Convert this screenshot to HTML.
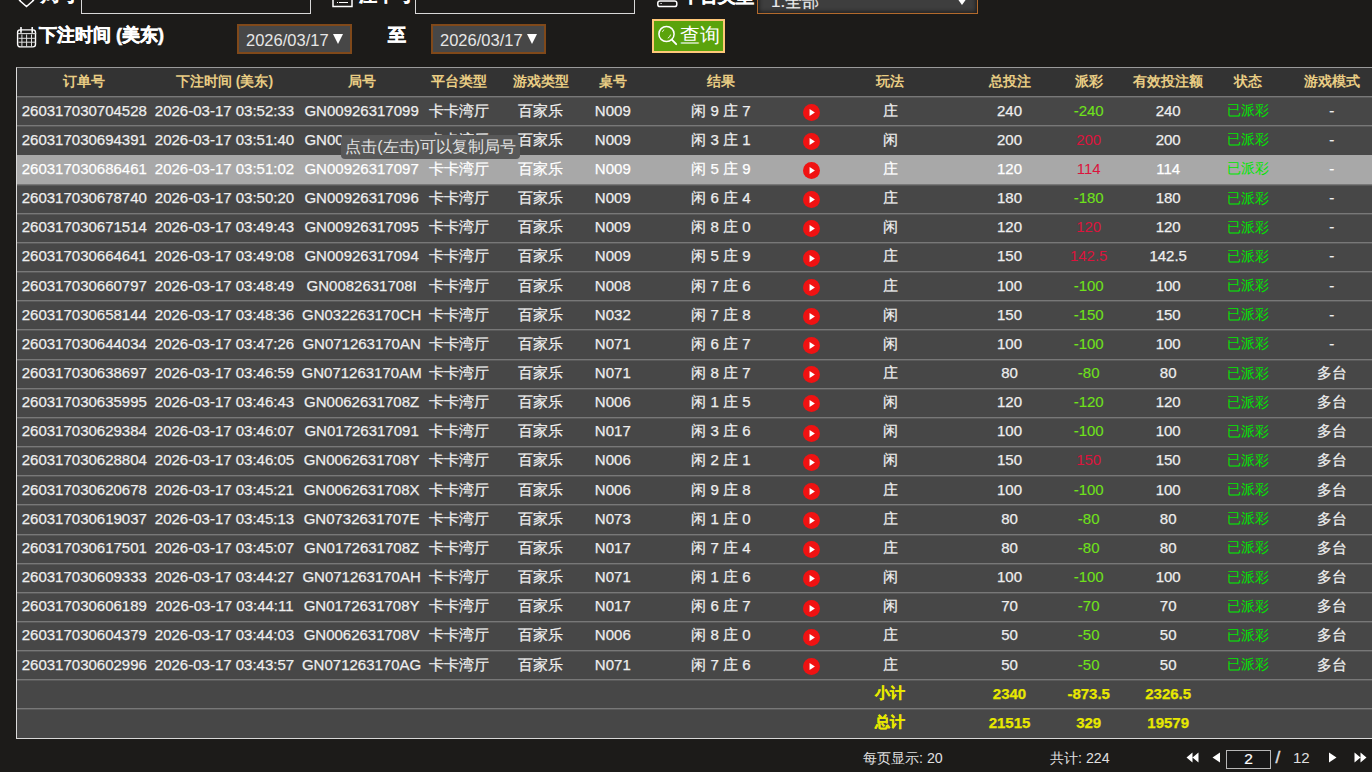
<!DOCTYPE html>
<html><head><meta charset="utf-8">
<style>
html,body{margin:0;padding:0;}
body{width:1372px;height:772px;overflow:hidden;position:relative;background:#1c1b19;font-family:"Liberation Sans",sans-serif;color:#eee;}
.abs{position:absolute;}
.lbl{position:absolute;color:#fff;font-weight:bold;font-size:18px;white-space:nowrap;-webkit-text-stroke:0.5px #fff;}
.inp{position:absolute;border:1px solid #d8d8d8;background:#1c1b19;box-sizing:border-box;}
.date{position:absolute;box-sizing:border-box;border:2.5px solid #80491a;background:#474747;color:#e6e6e6;font-size:16px;line-height:24px;white-space:nowrap;}
.tbl{position:absolute;left:16px;top:67px;width:1400px;height:672px;}
.tbl .frame{position:absolute;left:0;top:0;right:0;bottom:0;border-left:1.5px solid #dcdcdc;border-top:1px solid #9a9a9a;border-bottom:1.5px solid #d8d8d8;box-sizing:border-box;pointer-events:none;z-index:5}
.hd,.rw{position:absolute;left:0;width:1400px;}
.hd{background:#333;}
.hd .c{color:#e9cd84;font-weight:bold;font-size:14px;}
.rw{background:#474747;box-sizing:border-box;}
.rw::before{content:"";position:absolute;left:0;right:0;top:-0.4px;height:1px;background:#787878;box-shadow:0 1px 0 #5a5a5a;}
.rw.hl::before{display:none}
.rw.hl{background:#a8a8a8;}
.rw.hl .c{color:#fff;}
.c{position:absolute;top:0;bottom:0;width:200px;text-align:center;white-space:nowrap;font-size:15px;display:flex;align-items:center;justify-content:center;}
.rw .c{transform:translateY(-0.8px);-webkit-text-stroke:0.25px currentColor;}
.rw.sm .c{transform:translateY(-1.5px);}
.rw .c.cj{transform:translateY(0.4px);}
.ic{position:absolute;top:7.3px;width:17px;height:17px;}
.ic svg{display:block}
.rw .c.g{color:#6fe21a;-webkit-text-stroke:0.1px currentColor;}
.rw .c.r{color:#dc143c;-webkit-text-stroke:0;}
.rw .c.st{color:#00e600;font-size:14px;-webkit-text-stroke:0;}
.y{color:#e8e800 !important;font-weight:bold;font-size:15px !important;}
.tip{position:absolute;left:341px;top:135px;width:179px;height:24px;border-radius:4px;background:#585858;color:#e2e2e2;font-size:16px;line-height:24px;text-align:center;white-space:nowrap;z-index:10;}
.ft{position:absolute;color:#e0e0e0;font-size:14.2px;white-space:nowrap;}
</style></head><body>
<!-- top filter row (cut off) -->
<svg class="abs" style="left:18px;top:-8px" width="17" height="17" viewBox="0 0 17 17"><path d="M8.5 1.5 L15.4 8.5 L8.5 14.6 L1.6 8.5 Z" fill="none" stroke="#fff" stroke-width="1.5"/></svg>
<div class="lbl" style="left:41px;top:-17.2px">局号</div>
<div class="inp" style="left:81px;top:-20px;width:230px;height:34px"></div>
<svg class="abs" style="left:332px;top:-12px" width="21" height="20" viewBox="0 0 21 20"><rect x="1" y="1" width="19" height="17.5" fill="none" stroke="#fff" stroke-width="1.5"/><path d="M5 14.5 h1 M7 14.5 h9" stroke="#fff" stroke-width="1.2"/></svg>
<div class="lbl" style="left:359px;top:-17px">注单号</div>
<div class="inp" style="left:415px;top:-20px;width:220px;height:34px"></div>
<svg class="abs" style="left:656px;top:0px" width="22" height="8" viewBox="0 0 22 8"><rect x="1.8" y="0.9" width="19" height="5.7" rx="2.2" fill="none" stroke="#fff" stroke-width="1.5"/><path d="M4.5 3.5 h1.2" stroke="#fff" stroke-width="1"/></svg>
<div class="lbl" style="left:682px;top:-16.5px">平台类型</div>
<div class="abs" style="left:757px;top:-20px;width:221px;height:34px;box-sizing:border-box;border:1.5px solid #b26a2c;background:#3e3e3e;box-shadow:inset 0 0 4px 1px #1a1a1a;">
  <div style="position:absolute;left:13px;top:8.5px;font-size:17px;color:#ececec;-webkit-text-stroke:0.2px #ececec">1.全部</div>
  <div style="position:absolute;left:199px;top:17px;width:0;height:0;border-left:5.5px solid transparent;border-right:5.5px solid transparent;border-top:7px solid #fff;"></div>
</div>
<!-- date row -->
<svg class="abs" style="left:16px;top:27px" width="22" height="22" viewBox="0 0 22 22"><rect x="1.6" y="2.9" width="17.9" height="17" rx="2.6" fill="none" stroke="#fff" stroke-width="1.4"/><path d="M1.6 6.6 H20.2" stroke="#ddd" stroke-width="1.1"/><path d="M2.5 11.3 H19.5 M2.5 15.2 H19.5 M5.9 7.5 V19.5 M10.6 7.5 V19.5 M15.5 7.5 V19.5" stroke="#e0e0e0" stroke-width="1"/><path d="M5 0.6 V5.2 M16.2 0.6 V5.2" stroke="#fff" stroke-width="1.6" stroke-linecap="round"/></svg>
<div class="lbl" style="left:39px;top:23px">下注时间 (美东)</div>
<div class="date" style="left:237px;top:24px;width:115px;height:30px;"><span style="position:absolute;left:7px;top:1.5px;font-size:16.5px">2026/03/17</span><span style="position:absolute;left:93.5px;top:7.5px;width:0;height:0;border-left:5.5px solid transparent;border-right:5.5px solid transparent;border-top:10px solid #fff;"></span></div>
<div class="lbl" style="left:387.5px;top:23px;font-size:17.5px;-webkit-text-stroke:0.7px #fff">至</div>
<div class="date" style="left:431px;top:24px;width:115px;height:30px;"><span style="position:absolute;left:7px;top:1.5px;font-size:16.5px">2026/03/17</span><span style="position:absolute;left:93.5px;top:7.5px;width:0;height:0;border-left:5.5px solid transparent;border-right:5.5px solid transparent;border-top:10px solid #fff;"></span></div>
<div class="abs" style="left:652px;top:19px;width:73px;height:34px;box-sizing:border-box;border:2px solid #ffc878;background:#5aa30c;">
  <svg style="position:absolute;left:4.3px;top:4px" width="20" height="21" viewBox="0 0 20 21"><circle cx="8.5" cy="9" r="7.6" fill="none" stroke="#fff" stroke-width="1.5"/><path d="M13.8 14.6 L18.2 19.2" stroke="#fff" stroke-width="1.8" stroke-linecap="round"/><path d="M4.4 6.8 A5 5 0 0 1 6.2 4.6" stroke="#fff" stroke-width="0.9" fill="none"/><path d="M12.6 9.6 A5 5 0 0 1 9.8 13.2" stroke="#fff" stroke-width="0.9" fill="none"/></svg>
  <div style="position:absolute;left:26.2px;top:0.6px;font-size:20px;line-height:26px;color:#fff;">查询</div>
</div>
<!-- table -->
<div class="tbl">
<div class="hd" style="top:0px;height:29.50px"><span class="c cj" style="left:-31.7px">订单号</span><span class="c cj" style="left:108.5px">下注时间 (美东)</span><span class="c cj" style="left:245.6px">局号</span><span class="c cj" style="left:342.7px">平台类型</span><span class="c cj" style="left:424.6px">游戏类型</span><span class="c cj" style="left:496.8px">桌号</span><span class="c cj" style="left:605.0px">结果</span><span class="c cj" style="left:774.0px">玩法</span><span class="c cj" style="left:893.5px">总投注</span><span class="c cj" style="left:972.7px">派彩</span><span class="c cj" style="left:1052.2px">有效投注额</span><span class="c cj" style="left:1131.6px">状态</span><span class="c cj" style="left:1215.7px">游戏模式</span></div>
<div class="rw" style="top:29.50px;height:29.16px"><span class="c " style="left:-31.7px">260317030704528</span><span class="c " style="left:108.5px">2026-03-17 03:52:33</span><span class="c " style="left:245.6px">GN00926317099</span><span class="c cj" style="left:342.7px">卡卡湾厅</span><span class="c cj" style="left:424.6px">百家乐</span><span class="c " style="left:496.8px">N009</span><span class="c cj" style="left:605.0px">闲 9 庄 7</span><span class="ic" style="left:787.1px"><svg width="17" height="17" viewBox="0 0 16 16"><circle cx="8" cy="8" r="8" fill="#f01212"/><path d="M6.2 4.6 L11.2 8 L6.2 11.4 Z" fill="#fff"/></svg></span><span class="c cj" style="left:774.0px">庄</span><span class="c " style="left:893.5px">240</span><span class="c g" style="left:972.7px">-240</span><span class="c " style="left:1052.2px">240</span><span class="c st cj" style="left:1131.6px">已派彩</span><span class="c " style="left:1215.7px">-</span></div>
<div class="rw" style="top:58.66px;height:29.16px"><span class="c " style="left:-31.7px">260317030694391</span><span class="c " style="left:108.5px">2026-03-17 03:51:40</span><span class="c " style="left:245.6px">GN00926317098</span><span class="c cj" style="left:342.7px">卡卡湾厅</span><span class="c cj" style="left:424.6px">百家乐</span><span class="c " style="left:496.8px">N009</span><span class="c cj" style="left:605.0px">闲 3 庄 1</span><span class="ic" style="left:787.1px"><svg width="17" height="17" viewBox="0 0 16 16"><circle cx="8" cy="8" r="8" fill="#f01212"/><path d="M6.2 4.6 L11.2 8 L6.2 11.4 Z" fill="#fff"/></svg></span><span class="c cj" style="left:774.0px">闲</span><span class="c " style="left:893.5px">200</span><span class="c r" style="left:972.7px">200</span><span class="c " style="left:1052.2px">200</span><span class="c st cj" style="left:1131.6px">已派彩</span><span class="c " style="left:1215.7px">-</span></div>
<div class="rw hl" style="top:87.82px;height:29.16px"><span class="c " style="left:-31.7px">260317030686461</span><span class="c " style="left:108.5px">2026-03-17 03:51:02</span><span class="c " style="left:245.6px">GN00926317097</span><span class="c cj" style="left:342.7px">卡卡湾厅</span><span class="c cj" style="left:424.6px">百家乐</span><span class="c " style="left:496.8px">N009</span><span class="c cj" style="left:605.0px">闲 5 庄 9</span><span class="ic" style="left:787.1px"><svg width="17" height="17" viewBox="0 0 16 16"><circle cx="8" cy="8" r="8" fill="#f01212"/><path d="M6.2 4.6 L11.2 8 L6.2 11.4 Z" fill="#fff"/></svg></span><span class="c cj" style="left:774.0px">庄</span><span class="c " style="left:893.5px">120</span><span class="c r" style="left:972.7px">114</span><span class="c " style="left:1052.2px">114</span><span class="c st cj" style="left:1131.6px">已派彩</span><span class="c " style="left:1215.7px">-</span></div>
<div class="rw" style="top:116.98px;height:29.16px"><span class="c " style="left:-31.7px">260317030678740</span><span class="c " style="left:108.5px">2026-03-17 03:50:20</span><span class="c " style="left:245.6px">GN00926317096</span><span class="c cj" style="left:342.7px">卡卡湾厅</span><span class="c cj" style="left:424.6px">百家乐</span><span class="c " style="left:496.8px">N009</span><span class="c cj" style="left:605.0px">闲 6 庄 4</span><span class="ic" style="left:787.1px"><svg width="17" height="17" viewBox="0 0 16 16"><circle cx="8" cy="8" r="8" fill="#f01212"/><path d="M6.2 4.6 L11.2 8 L6.2 11.4 Z" fill="#fff"/></svg></span><span class="c cj" style="left:774.0px">庄</span><span class="c " style="left:893.5px">180</span><span class="c g" style="left:972.7px">-180</span><span class="c " style="left:1052.2px">180</span><span class="c st cj" style="left:1131.6px">已派彩</span><span class="c " style="left:1215.7px">-</span></div>
<div class="rw" style="top:146.14px;height:29.16px"><span class="c " style="left:-31.7px">260317030671514</span><span class="c " style="left:108.5px">2026-03-17 03:49:43</span><span class="c " style="left:245.6px">GN00926317095</span><span class="c cj" style="left:342.7px">卡卡湾厅</span><span class="c cj" style="left:424.6px">百家乐</span><span class="c " style="left:496.8px">N009</span><span class="c cj" style="left:605.0px">闲 8 庄 0</span><span class="ic" style="left:787.1px"><svg width="17" height="17" viewBox="0 0 16 16"><circle cx="8" cy="8" r="8" fill="#f01212"/><path d="M6.2 4.6 L11.2 8 L6.2 11.4 Z" fill="#fff"/></svg></span><span class="c cj" style="left:774.0px">闲</span><span class="c " style="left:893.5px">120</span><span class="c r" style="left:972.7px">120</span><span class="c " style="left:1052.2px">120</span><span class="c st cj" style="left:1131.6px">已派彩</span><span class="c " style="left:1215.7px">-</span></div>
<div class="rw" style="top:175.30px;height:29.16px"><span class="c " style="left:-31.7px">260317030664641</span><span class="c " style="left:108.5px">2026-03-17 03:49:08</span><span class="c " style="left:245.6px">GN00926317094</span><span class="c cj" style="left:342.7px">卡卡湾厅</span><span class="c cj" style="left:424.6px">百家乐</span><span class="c " style="left:496.8px">N009</span><span class="c cj" style="left:605.0px">闲 5 庄 9</span><span class="ic" style="left:787.1px"><svg width="17" height="17" viewBox="0 0 16 16"><circle cx="8" cy="8" r="8" fill="#f01212"/><path d="M6.2 4.6 L11.2 8 L6.2 11.4 Z" fill="#fff"/></svg></span><span class="c cj" style="left:774.0px">庄</span><span class="c " style="left:893.5px">150</span><span class="c r" style="left:972.7px">142.5</span><span class="c " style="left:1052.2px">142.5</span><span class="c st cj" style="left:1131.6px">已派彩</span><span class="c " style="left:1215.7px">-</span></div>
<div class="rw" style="top:204.46px;height:29.16px"><span class="c " style="left:-31.7px">260317030660797</span><span class="c " style="left:108.5px">2026-03-17 03:48:49</span><span class="c " style="left:245.6px">GN0082631708I</span><span class="c cj" style="left:342.7px">卡卡湾厅</span><span class="c cj" style="left:424.6px">百家乐</span><span class="c " style="left:496.8px">N008</span><span class="c cj" style="left:605.0px">闲 7 庄 6</span><span class="ic" style="left:787.1px"><svg width="17" height="17" viewBox="0 0 16 16"><circle cx="8" cy="8" r="8" fill="#f01212"/><path d="M6.2 4.6 L11.2 8 L6.2 11.4 Z" fill="#fff"/></svg></span><span class="c cj" style="left:774.0px">庄</span><span class="c " style="left:893.5px">100</span><span class="c g" style="left:972.7px">-100</span><span class="c " style="left:1052.2px">100</span><span class="c st cj" style="left:1131.6px">已派彩</span><span class="c " style="left:1215.7px">-</span></div>
<div class="rw" style="top:233.62px;height:29.16px"><span class="c " style="left:-31.7px">260317030658144</span><span class="c " style="left:108.5px">2026-03-17 03:48:36</span><span class="c " style="left:245.6px">GN032263170CH</span><span class="c cj" style="left:342.7px">卡卡湾厅</span><span class="c cj" style="left:424.6px">百家乐</span><span class="c " style="left:496.8px">N032</span><span class="c cj" style="left:605.0px">闲 7 庄 8</span><span class="ic" style="left:787.1px"><svg width="17" height="17" viewBox="0 0 16 16"><circle cx="8" cy="8" r="8" fill="#f01212"/><path d="M6.2 4.6 L11.2 8 L6.2 11.4 Z" fill="#fff"/></svg></span><span class="c cj" style="left:774.0px">闲</span><span class="c " style="left:893.5px">150</span><span class="c g" style="left:972.7px">-150</span><span class="c " style="left:1052.2px">150</span><span class="c st cj" style="left:1131.6px">已派彩</span><span class="c " style="left:1215.7px">-</span></div>
<div class="rw" style="top:262.78px;height:29.16px"><span class="c " style="left:-31.7px">260317030644034</span><span class="c " style="left:108.5px">2026-03-17 03:47:26</span><span class="c " style="left:245.6px">GN071263170AN</span><span class="c cj" style="left:342.7px">卡卡湾厅</span><span class="c cj" style="left:424.6px">百家乐</span><span class="c " style="left:496.8px">N071</span><span class="c cj" style="left:605.0px">闲 6 庄 7</span><span class="ic" style="left:787.1px"><svg width="17" height="17" viewBox="0 0 16 16"><circle cx="8" cy="8" r="8" fill="#f01212"/><path d="M6.2 4.6 L11.2 8 L6.2 11.4 Z" fill="#fff"/></svg></span><span class="c cj" style="left:774.0px">闲</span><span class="c " style="left:893.5px">100</span><span class="c g" style="left:972.7px">-100</span><span class="c " style="left:1052.2px">100</span><span class="c st cj" style="left:1131.6px">已派彩</span><span class="c " style="left:1215.7px">-</span></div>
<div class="rw" style="top:291.94px;height:29.16px"><span class="c " style="left:-31.7px">260317030638697</span><span class="c " style="left:108.5px">2026-03-17 03:46:59</span><span class="c " style="left:245.6px">GN071263170AM</span><span class="c cj" style="left:342.7px">卡卡湾厅</span><span class="c cj" style="left:424.6px">百家乐</span><span class="c " style="left:496.8px">N071</span><span class="c cj" style="left:605.0px">闲 8 庄 7</span><span class="ic" style="left:787.1px"><svg width="17" height="17" viewBox="0 0 16 16"><circle cx="8" cy="8" r="8" fill="#f01212"/><path d="M6.2 4.6 L11.2 8 L6.2 11.4 Z" fill="#fff"/></svg></span><span class="c cj" style="left:774.0px">庄</span><span class="c " style="left:893.5px">80</span><span class="c g" style="left:972.7px">-80</span><span class="c " style="left:1052.2px">80</span><span class="c st cj" style="left:1131.6px">已派彩</span><span class="c cj" style="left:1215.7px">多台</span></div>
<div class="rw" style="top:321.10px;height:29.16px"><span class="c " style="left:-31.7px">260317030635995</span><span class="c " style="left:108.5px">2026-03-17 03:46:43</span><span class="c " style="left:245.6px">GN0062631708Z</span><span class="c cj" style="left:342.7px">卡卡湾厅</span><span class="c cj" style="left:424.6px">百家乐</span><span class="c " style="left:496.8px">N006</span><span class="c cj" style="left:605.0px">闲 1 庄 5</span><span class="ic" style="left:787.1px"><svg width="17" height="17" viewBox="0 0 16 16"><circle cx="8" cy="8" r="8" fill="#f01212"/><path d="M6.2 4.6 L11.2 8 L6.2 11.4 Z" fill="#fff"/></svg></span><span class="c cj" style="left:774.0px">闲</span><span class="c " style="left:893.5px">120</span><span class="c g" style="left:972.7px">-120</span><span class="c " style="left:1052.2px">120</span><span class="c st cj" style="left:1131.6px">已派彩</span><span class="c cj" style="left:1215.7px">多台</span></div>
<div class="rw" style="top:350.26px;height:29.16px"><span class="c " style="left:-31.7px">260317030629384</span><span class="c " style="left:108.5px">2026-03-17 03:46:07</span><span class="c " style="left:245.6px">GN01726317091</span><span class="c cj" style="left:342.7px">卡卡湾厅</span><span class="c cj" style="left:424.6px">百家乐</span><span class="c " style="left:496.8px">N017</span><span class="c cj" style="left:605.0px">闲 3 庄 6</span><span class="ic" style="left:787.1px"><svg width="17" height="17" viewBox="0 0 16 16"><circle cx="8" cy="8" r="8" fill="#f01212"/><path d="M6.2 4.6 L11.2 8 L6.2 11.4 Z" fill="#fff"/></svg></span><span class="c cj" style="left:774.0px">闲</span><span class="c " style="left:893.5px">100</span><span class="c g" style="left:972.7px">-100</span><span class="c " style="left:1052.2px">100</span><span class="c st cj" style="left:1131.6px">已派彩</span><span class="c cj" style="left:1215.7px">多台</span></div>
<div class="rw" style="top:379.42px;height:29.16px"><span class="c " style="left:-31.7px">260317030628804</span><span class="c " style="left:108.5px">2026-03-17 03:46:05</span><span class="c " style="left:245.6px">GN0062631708Y</span><span class="c cj" style="left:342.7px">卡卡湾厅</span><span class="c cj" style="left:424.6px">百家乐</span><span class="c " style="left:496.8px">N006</span><span class="c cj" style="left:605.0px">闲 2 庄 1</span><span class="ic" style="left:787.1px"><svg width="17" height="17" viewBox="0 0 16 16"><circle cx="8" cy="8" r="8" fill="#f01212"/><path d="M6.2 4.6 L11.2 8 L6.2 11.4 Z" fill="#fff"/></svg></span><span class="c cj" style="left:774.0px">闲</span><span class="c " style="left:893.5px">150</span><span class="c r" style="left:972.7px">150</span><span class="c " style="left:1052.2px">150</span><span class="c st cj" style="left:1131.6px">已派彩</span><span class="c cj" style="left:1215.7px">多台</span></div>
<div class="rw" style="top:408.58px;height:29.16px"><span class="c " style="left:-31.7px">260317030620678</span><span class="c " style="left:108.5px">2026-03-17 03:45:21</span><span class="c " style="left:245.6px">GN0062631708X</span><span class="c cj" style="left:342.7px">卡卡湾厅</span><span class="c cj" style="left:424.6px">百家乐</span><span class="c " style="left:496.8px">N006</span><span class="c cj" style="left:605.0px">闲 9 庄 8</span><span class="ic" style="left:787.1px"><svg width="17" height="17" viewBox="0 0 16 16"><circle cx="8" cy="8" r="8" fill="#f01212"/><path d="M6.2 4.6 L11.2 8 L6.2 11.4 Z" fill="#fff"/></svg></span><span class="c cj" style="left:774.0px">庄</span><span class="c " style="left:893.5px">100</span><span class="c g" style="left:972.7px">-100</span><span class="c " style="left:1052.2px">100</span><span class="c st cj" style="left:1131.6px">已派彩</span><span class="c cj" style="left:1215.7px">多台</span></div>
<div class="rw" style="top:437.74px;height:29.16px"><span class="c " style="left:-31.7px">260317030619037</span><span class="c " style="left:108.5px">2026-03-17 03:45:13</span><span class="c " style="left:245.6px">GN0732631707E</span><span class="c cj" style="left:342.7px">卡卡湾厅</span><span class="c cj" style="left:424.6px">百家乐</span><span class="c " style="left:496.8px">N073</span><span class="c cj" style="left:605.0px">闲 1 庄 0</span><span class="ic" style="left:787.1px"><svg width="17" height="17" viewBox="0 0 16 16"><circle cx="8" cy="8" r="8" fill="#f01212"/><path d="M6.2 4.6 L11.2 8 L6.2 11.4 Z" fill="#fff"/></svg></span><span class="c cj" style="left:774.0px">庄</span><span class="c " style="left:893.5px">80</span><span class="c g" style="left:972.7px">-80</span><span class="c " style="left:1052.2px">80</span><span class="c st cj" style="left:1131.6px">已派彩</span><span class="c cj" style="left:1215.7px">多台</span></div>
<div class="rw" style="top:466.90px;height:29.16px"><span class="c " style="left:-31.7px">260317030617501</span><span class="c " style="left:108.5px">2026-03-17 03:45:07</span><span class="c " style="left:245.6px">GN0172631708Z</span><span class="c cj" style="left:342.7px">卡卡湾厅</span><span class="c cj" style="left:424.6px">百家乐</span><span class="c " style="left:496.8px">N017</span><span class="c cj" style="left:605.0px">闲 7 庄 4</span><span class="ic" style="left:787.1px"><svg width="17" height="17" viewBox="0 0 16 16"><circle cx="8" cy="8" r="8" fill="#f01212"/><path d="M6.2 4.6 L11.2 8 L6.2 11.4 Z" fill="#fff"/></svg></span><span class="c cj" style="left:774.0px">庄</span><span class="c " style="left:893.5px">80</span><span class="c g" style="left:972.7px">-80</span><span class="c " style="left:1052.2px">80</span><span class="c st cj" style="left:1131.6px">已派彩</span><span class="c cj" style="left:1215.7px">多台</span></div>
<div class="rw" style="top:496.06px;height:29.16px"><span class="c " style="left:-31.7px">260317030609333</span><span class="c " style="left:108.5px">2026-03-17 03:44:27</span><span class="c " style="left:245.6px">GN071263170AH</span><span class="c cj" style="left:342.7px">卡卡湾厅</span><span class="c cj" style="left:424.6px">百家乐</span><span class="c " style="left:496.8px">N071</span><span class="c cj" style="left:605.0px">闲 1 庄 6</span><span class="ic" style="left:787.1px"><svg width="17" height="17" viewBox="0 0 16 16"><circle cx="8" cy="8" r="8" fill="#f01212"/><path d="M6.2 4.6 L11.2 8 L6.2 11.4 Z" fill="#fff"/></svg></span><span class="c cj" style="left:774.0px">闲</span><span class="c " style="left:893.5px">100</span><span class="c g" style="left:972.7px">-100</span><span class="c " style="left:1052.2px">100</span><span class="c st cj" style="left:1131.6px">已派彩</span><span class="c cj" style="left:1215.7px">多台</span></div>
<div class="rw" style="top:525.22px;height:29.16px"><span class="c " style="left:-31.7px">260317030606189</span><span class="c " style="left:108.5px">2026-03-17 03:44:11</span><span class="c " style="left:245.6px">GN0172631708Y</span><span class="c cj" style="left:342.7px">卡卡湾厅</span><span class="c cj" style="left:424.6px">百家乐</span><span class="c " style="left:496.8px">N017</span><span class="c cj" style="left:605.0px">闲 6 庄 7</span><span class="ic" style="left:787.1px"><svg width="17" height="17" viewBox="0 0 16 16"><circle cx="8" cy="8" r="8" fill="#f01212"/><path d="M6.2 4.6 L11.2 8 L6.2 11.4 Z" fill="#fff"/></svg></span><span class="c cj" style="left:774.0px">闲</span><span class="c " style="left:893.5px">70</span><span class="c g" style="left:972.7px">-70</span><span class="c " style="left:1052.2px">70</span><span class="c st cj" style="left:1131.6px">已派彩</span><span class="c cj" style="left:1215.7px">多台</span></div>
<div class="rw" style="top:554.38px;height:29.16px"><span class="c " style="left:-31.7px">260317030604379</span><span class="c " style="left:108.5px">2026-03-17 03:44:03</span><span class="c " style="left:245.6px">GN0062631708V</span><span class="c cj" style="left:342.7px">卡卡湾厅</span><span class="c cj" style="left:424.6px">百家乐</span><span class="c " style="left:496.8px">N006</span><span class="c cj" style="left:605.0px">闲 8 庄 0</span><span class="ic" style="left:787.1px"><svg width="17" height="17" viewBox="0 0 16 16"><circle cx="8" cy="8" r="8" fill="#f01212"/><path d="M6.2 4.6 L11.2 8 L6.2 11.4 Z" fill="#fff"/></svg></span><span class="c cj" style="left:774.0px">庄</span><span class="c " style="left:893.5px">50</span><span class="c g" style="left:972.7px">-50</span><span class="c " style="left:1052.2px">50</span><span class="c st cj" style="left:1131.6px">已派彩</span><span class="c cj" style="left:1215.7px">多台</span></div>
<div class="rw" style="top:583.54px;height:29.16px"><span class="c " style="left:-31.7px">260317030602996</span><span class="c " style="left:108.5px">2026-03-17 03:43:57</span><span class="c " style="left:245.6px">GN071263170AG</span><span class="c cj" style="left:342.7px">卡卡湾厅</span><span class="c cj" style="left:424.6px">百家乐</span><span class="c " style="left:496.8px">N071</span><span class="c cj" style="left:605.0px">闲 7 庄 6</span><span class="ic" style="left:787.1px"><svg width="17" height="17" viewBox="0 0 16 16"><circle cx="8" cy="8" r="8" fill="#f01212"/><path d="M6.2 4.6 L11.2 8 L6.2 11.4 Z" fill="#fff"/></svg></span><span class="c cj" style="left:774.0px">庄</span><span class="c " style="left:893.5px">50</span><span class="c g" style="left:972.7px">-50</span><span class="c " style="left:1052.2px">50</span><span class="c st cj" style="left:1131.6px">已派彩</span><span class="c cj" style="left:1215.7px">多台</span></div>
<div class="rw sm" style="top:612.70px;height:29px"><span class="c y" style="left:774.0px">小计</span><span class="c y" style="left:893.5px">2340</span><span class="c y" style="left:972.7px">-873.5</span><span class="c y" style="left:1052.2px">2326.5</span></div>
<div class="rw sm last" style="top:641.70px;height:29.5px"><span class="c y" style="left:774.0px">总计</span><span class="c y" style="left:893.5px">21515</span><span class="c y" style="left:972.7px">329</span><span class="c y" style="left:1052.2px">19579</span></div>
<div class="frame"></div>
</div>
<div class="tip">点击(左击)可以复制局号</div>
<!-- footer -->
<div class="ft" style="left:863px;top:749px">每页显示: 20</div>
<div class="ft" style="left:1050px;top:749px">共计: 224</div>
<svg class="abs" style="left:1186px;top:752px" width="13" height="11" viewBox="0 0 13 11"><path d="M6.5 0.5 L0.5 5.5 L6.5 10.5 Z M12.5 0.5 L6.5 5.5 L12.5 10.5 Z" fill="#fff"/></svg>
<svg class="abs" style="left:1212px;top:752px" width="9" height="11" viewBox="0 0 9 11"><path d="M8 0.5 L0.5 5.5 L8 10.5 Z" fill="#fff"/></svg>
<div class="abs" style="left:1226px;top:750px;width:45px;height:19px;box-sizing:border-box;border:1.5px solid #b8b8b8;background:#181818;color:#fff;font-size:15.5px;line-height:16px;text-align:center;-webkit-text-stroke:0.2px #fff">2</div>
<div class="ft" style="left:1275.5px;top:748px;font-size:17px;-webkit-text-stroke:0.4px #e0e0e0">/</div>
<div class="ft" style="left:1293px;top:749px;font-size:15px">12</div>
<svg class="abs" style="left:1328px;top:752px" width="9" height="11" viewBox="0 0 9 11"><path d="M1 0.5 L8.5 5.5 L1 10.5 Z" fill="#fff"/></svg>
<svg class="abs" style="left:1354px;top:752px" width="13" height="11" viewBox="0 0 13 11"><path d="M0.5 0.5 L6.5 5.5 L0.5 10.5 Z M6.5 0.5 L12.5 5.5 L6.5 10.5 Z" fill="#fff"/></svg>
</body></html>
